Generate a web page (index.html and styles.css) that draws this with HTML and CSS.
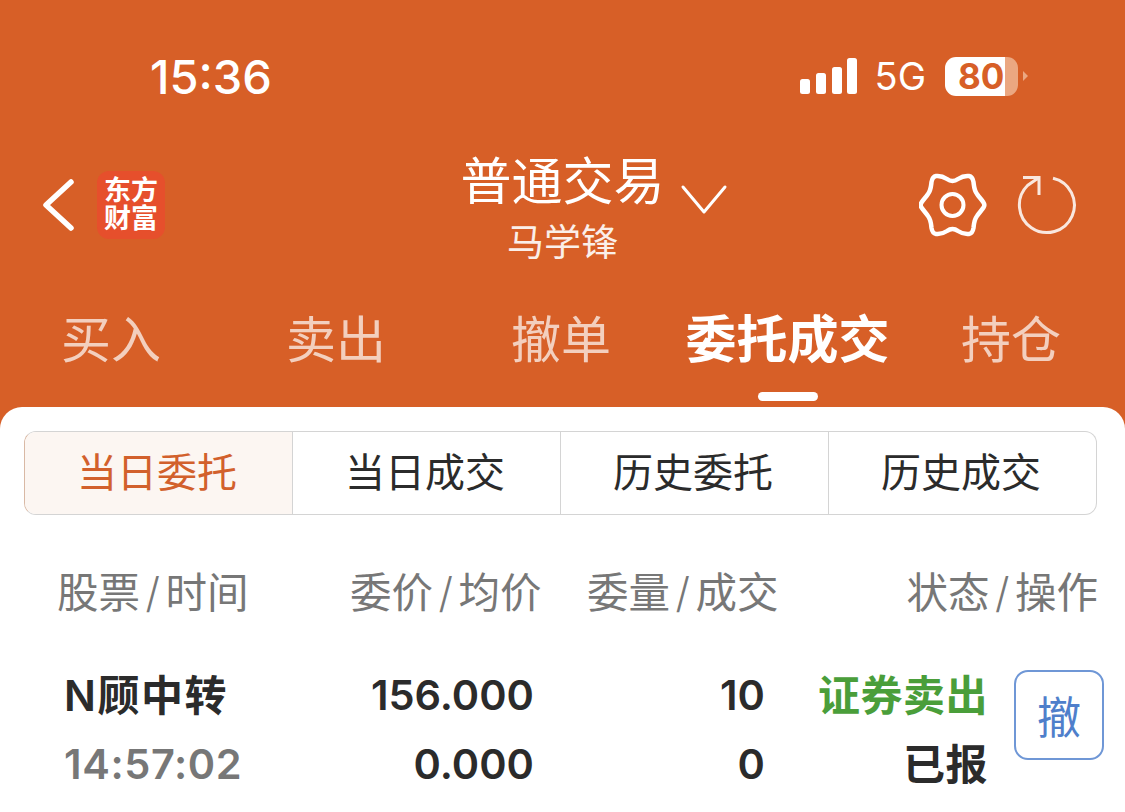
FILE: index.html
```html
<!DOCTYPE html>
<html lang="zh-CN">
<head>
    <meta charset="UTF-8">
    <meta name="viewport" content="width=device-width, initial-scale=1.0">
    <title>普通交易</title>
    <link rel="stylesheet" href="styles.css">
</head>
<body>
    <div class="phone">
        <!-- top orange area -->
        <header class="top">
            <div class="status-bar">
                <span class="time">15:36</span>
                <div class="status-right">
                    <svg class="signal" width="58" height="36" viewBox="0 0 58 36">
                        <rect x="0" y="21" width="10" height="15" rx="2.5"/>
                        <rect x="16" y="15" width="10" height="21" rx="2.5"/>
                        <rect x="32" y="9" width="10" height="27" rx="2.5"/>
                        <rect x="47" y="0" width="10" height="36" rx="2.5"/>
                    </svg>
                    <span class="net">5G</span>
                    <div class="battery"><span>80</span></div>
                    <div class="battery-tip"></div>
                </div>
            </div>

            <div class="nav">
                <div class="nav-left">
                    <svg class="back" width="34" height="54" viewBox="0 0 34 54">
                        <path d="M30 4 L5 27 L30 50" fill="none" stroke="#fff" stroke-width="5.5" stroke-linecap="round" stroke-linejoin="round"/>
                    </svg>
                    <div class="logo"><span>东方</span><span>财富</span></div>
                </div>
                <div class="nav-title">
                    <div class="title">普通交易</div>
                    <div class="subtitle">马学锋</div>
                </div>
                <div class="nav-right">
                    <svg class="chevron" width="48" height="32" viewBox="0 0 48 32">
                        <path d="M3 3 L24 28 L45 3" fill="none" stroke="#fff" stroke-width="3" stroke-linecap="round" stroke-linejoin="round"/>
                    </svg>
                    <div class="nav-icons">
                        <svg width="68" height="68" viewBox="0 0 68 68">
                            <path d="M17 5 C21 4.5 25 6 28 8 C30 9.5 31.5 10 33.5 10 C35.5 10 37 9.5 39 8 C42 6 46 4.5 50 5 C53 5.5 54 8 54.5 11 C55 15 55 19 58 23 C60 26 63 29 64.5 31.5 C65.5 33 65.5 35 64.5 36.5 C63 39 60 42 58 45 C55 49 55 53 54.5 57 C54 60 53 62.5 50 63 C46 63.5 42 62 39 60 C37 58.5 35.5 58 33.5 58 C31.5 58 30 58.5 28 60 C25 62 21 63.5 17 63 C14 62.5 13 60 12.5 57 C12 53 12 49 9 45 C7 42 4 39 2.5 36.5 C1.5 35 1.5 33 2.5 31.5 C4 29 7 26 9 23 C12 19 12 15 12.5 11 C13 8 14 5.5 17 5 Z" fill="none" stroke="#fff" stroke-width="4.5" stroke-linejoin="round"/>
                            <circle cx="33.5" cy="34" r="11" fill="none" stroke="#fff" stroke-width="4"/>
                        </svg>
                        <svg width="60" height="60" viewBox="0 0 60 60">
                            <path d="M36 3.2 A27.5 27.5 0 1 1 10.5 10.5 L22 2.5 M6 2.5 H22 V20" fill="none" stroke="#fff" stroke-opacity="0.85" stroke-width="3"/>
                        </svg>
                    </div>
                </div>
            </div>

            <nav class="tabs">
                <div class="tab">买入</div>
                <div class="tab">卖出</div>
                <div class="tab">撤单</div>
                <div class="tab active">委托成交</div>
                <div class="tab">持仓</div>
            </nav>
        </header>

        <!-- white panel -->
        <main class="panel">
            <div class="segments">
                <div class="segment on">当日委托</div>
                <div class="segment">当日成交</div>
                <div class="segment">历史委托</div>
                <div class="segment">历史成交</div>
            </div>

            <div class="table-head">
                <span class="col-name">股票<i>/</i>时间</span>
                <span class="col-price">委价<i>/</i>均价</span>
                <span class="col-qty">委量<i>/</i>成交</span>
                <span class="col-status">状态<i>/</i>操作</span>
            </div>

            <div class="order">
                <div class="order-name">
                    <div class="stock">N顾中转</div>
                    <div class="when">14:57:02</div>
                </div>
                <div class="order-num price">
                    <div>156.000</div>
                    <div>0.000</div>
                </div>
                <div class="order-num qty">
                    <div>10</div>
                    <div>0</div>
                </div>
                <div class="order-status">
                    <div class="side">证券卖出</div>
                    <div class="state">已报</div>
                </div>
                <button class="cancel">撤</button>
            </div>
        </main>
    </div>
</body>
</html>
```

FILE: styles.css
```css
* {
    box-sizing: border-box;
}

body {
    margin: 0;
    font-family: Inter, "Noto Sans CJK SC", sans-serif;
    background-color: #d75f27;
    overflow: hidden;
}

.phone {
    width: 1125px;
    height: 812px;
    overflow: hidden;
}

/* top area */
.top {
    height: 407px;
    background-color: #d75f27;
    color: #fff;
}

.status-bar {
    height: 148px;
    padding: 4px 97px 0 150px;
    display: flex;
    justify-content: space-between;
    align-items: center;
}

.time {
    font-size: 47px;
    font-weight: 500;
}

.status-right {
    display: flex;
    align-items: center;
}

.signal {
    fill: #fff;
    margin-right: 17px;
}

.net {
    font-size: 38px;
    margin-right: 19px;
}

.battery {
    width: 73px;
    height: 39px;
    border-radius: 11px;
    background: linear-gradient(to right, #fff 60px, #eba781 60px);
    color: #d75f27;
    font-size: 35px;
    font-weight: 700;
    line-height: 39px;
    padding-left: 13px;
}

.battery-tip {
    width: 0;
    height: 0;
    margin-left: 5px;
    border-left: 5px solid #eba781;
    border-top: 5px solid transparent;
    border-bottom: 5px solid transparent;
}

.nav {
    height: 114px;
    display: grid;
    grid-template-columns: 1fr 210px 1fr;
    align-items: center;
}

.nav-left {
    display: flex;
    align-items: center;
    padding-left: 41px;
}

.back {
    margin-right: 22px;
}

.logo {
    width: 68px;
    height: 68px;
    border-radius: 12px;
    background-color: #e64f2c;
    display: flex;
    flex-direction: column;
    align-items: center;
    justify-content: center;
    font-size: 27px;
    font-weight: 700;
    line-height: 28px;
}

.nav-title {
    align-self: start;
    padding-top: 4px;
    text-align: center;
    white-space: nowrap;
}

.title {
    font-size: 51px;
    line-height: 60px;
}

.subtitle {
    margin-top: 12px;
    font-size: 37px;
    line-height: 38px;
    opacity: 0.9;
}

.nav-right {
    display: flex;
    justify-content: space-between;
    align-items: center;
    padding: 0 48px 0 12px;
}

.chevron {
    margin-top: -10px;
}

.nav-icons {
    display: flex;
    align-items: center;
    gap: 30px;
}

.tabs {
    display: grid;
    grid-template-columns: repeat(5, 1fr);
}

.tab {
    height: 139px;
    padding: 50px 3px 0 0;
    text-align: center;
    font-size: 50px;
    line-height: 56px;
    white-space: nowrap;
    opacity: 0.7;
}

.tab.active {
    padding-right: 0;
    font-weight: 700;
    font-size: 51px;
    opacity: 1;
    position: relative;
}

.tab.active::after {
    content: "";
    position: absolute;
    left: 50%;
    bottom: 0;
    width: 60px;
    height: 9px;
    margin-left: -30px;
    border-radius: 5px;
    background-color: #fff;
}

/* panel */
.panel {
    height: 405px;
    background-color: #fff;
    border-radius: 22px 22px 0 0;
    padding-top: 24px;
}

.segments {
    display: flex;
    width: 1073px;
    height: 84px;
    margin-left: 24px;
    border: 1.5px solid #d4d4d4;
    border-left-color: #d9b9a5;
    border-radius: 12px;
    overflow: hidden;
}

.segment {
    flex: 1;
    padding-right: 3px;
    text-align: center;
    font-size: 40px;
    line-height: 81px;
    color: #2b2b2b;
    border-left: 1.5px solid #d4d4d4;
}

.segment:first-child {
    border-left: none;
}

.segment.on {
    background-color: #fcf6f2;
    color: #d2602c;
}

.table-head {
    display: flex;
    height: 156px;
    padding: 48px 27px 0 57px;
    font-size: 41.5px;
    line-height: 60px;
    color: #777;
}

.table-head i {
    font-style: normal;
    margin: 0 5.5px;
    font-weight: 300;
}

.col-name {
    width: 293px;
}

.col-price {
    width: 237px;
}

.col-qty {
    flex: 1;
}

.order {
    display: flex;
    align-items: flex-start;
    padding-left: 64px;
    margin-top: -10px;
    font-size: 41.5px;
    font-weight: 600;
    line-height: 69px;
    color: #2b2b2b;
}

.order-name {
    width: 204px;
}

.stock {
    font-size: 42px;
    letter-spacing: 1.5px;
}

.when {
    color: #777;
    letter-spacing: 0.6px;
}

.order-num {
    text-align: right;
}

.price {
    width: 266px;
}

.qty {
    width: 231px;
}

.order-status {
    width: 223px;
    text-align: right;
    font-size: 42px;
    letter-spacing: 0.5px;
}

.side {
    color: #4a9e3a;
}

.cancel {
    width: 90px;
    height: 90px;
    margin: 9px 0 0 26px;
    padding: 0;
    font-family: inherit;
    font-size: 44px;
    color: #4f7fcb;
    background-color: #fff;
    border: 2px solid #6f97d6;
    border-radius: 14px;
}
```
